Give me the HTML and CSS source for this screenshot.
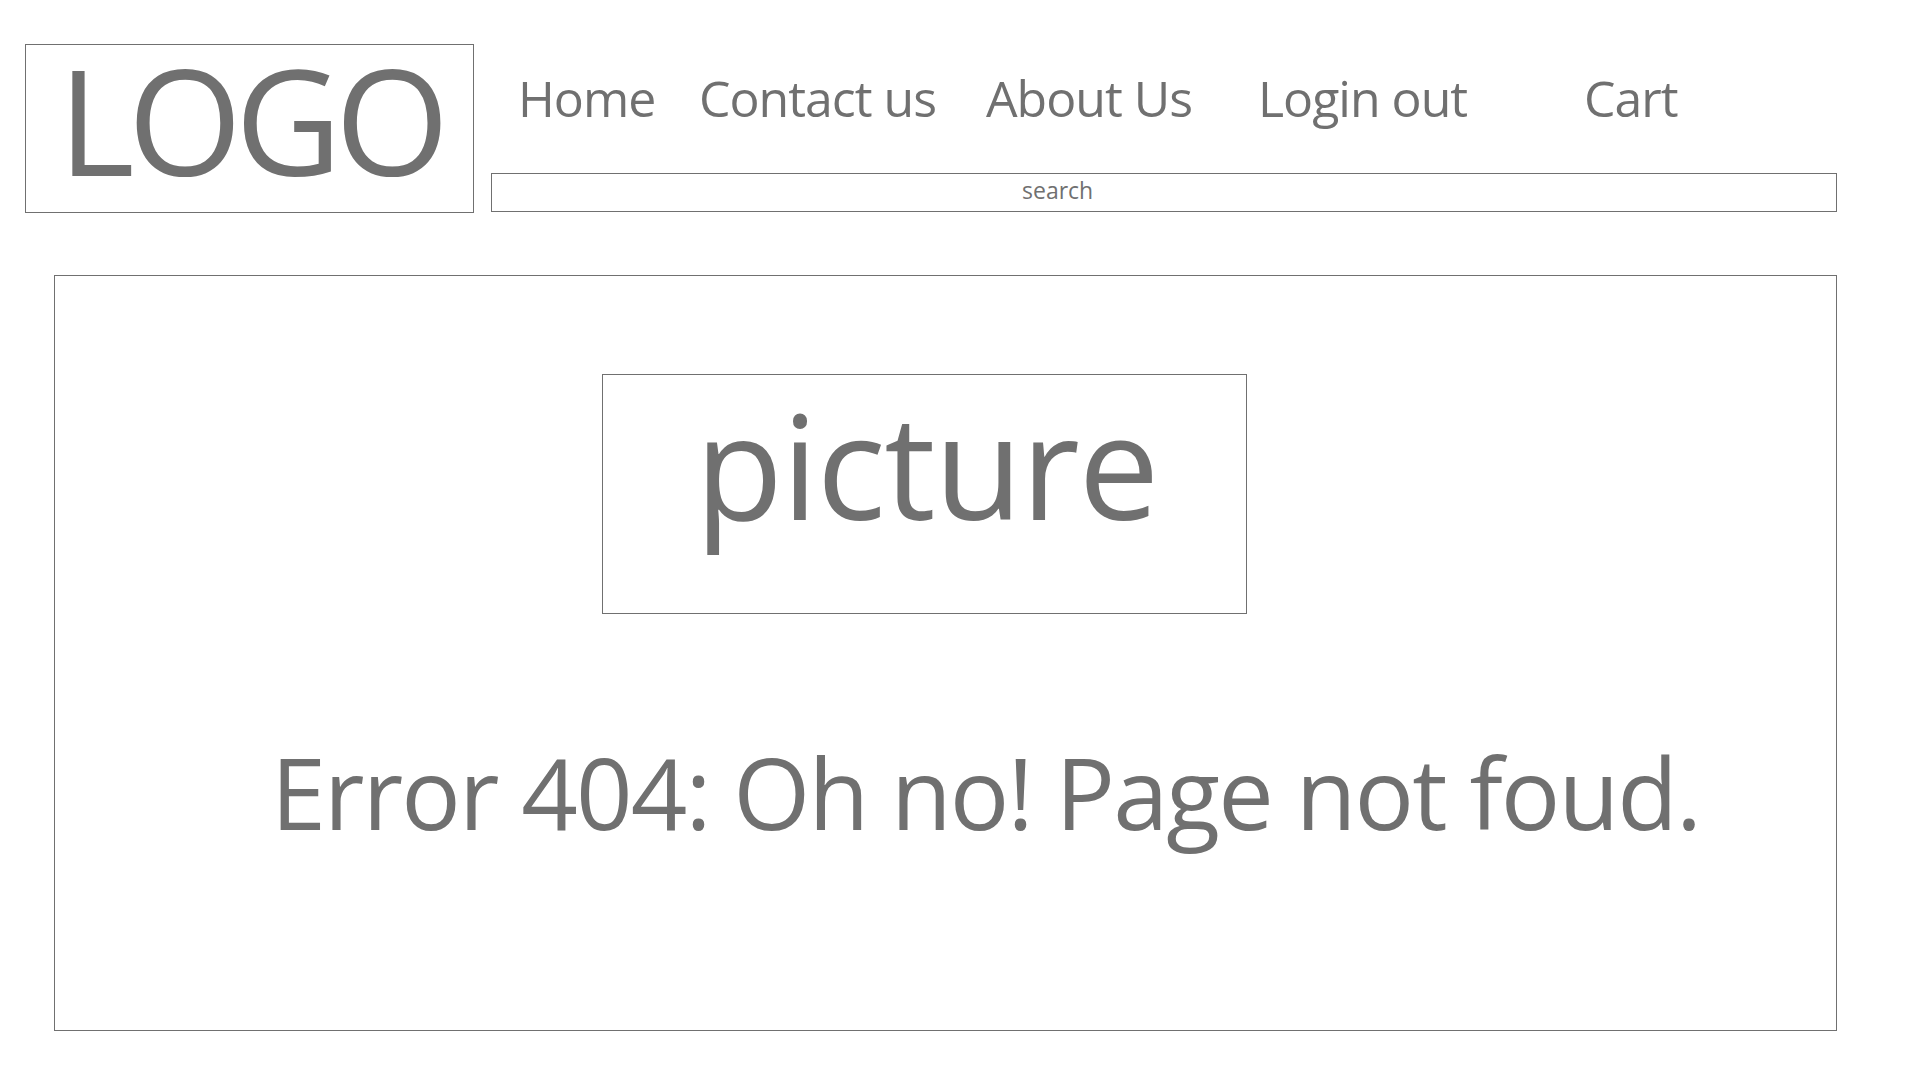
FILE: index.html
```html
<!DOCTYPE html>
<html lang="en">
<head>
<meta charset="utf-8">
<title>Error 404</title>
<link rel="stylesheet" href="styles.css">
</head>
<body>
<header class="header">
  <div class="logo">LOGO</div>
  <div class="header-right">
    <nav class="nav">
      <a class="nav-item" href="#">Home</a>
      <a class="nav-item" href="#">Contact us</a>
      <a class="nav-item" href="#">About Us</a>
      <a class="nav-item" href="#">Login out</a>
      <a class="nav-item" href="#">Cart</a>
    </nav>
    <div class="search">search</div>
  </div>
</header>
<main class="main">
  <div class="picture">picture</div>
  <p class="error">Error 404: Oh no! Page not foud.</p>
</main>
</body>
</html>
```
FILE: styles.css
```css
* { box-sizing: border-box; }
html, body { margin: 0; padding: 0; background: #ffffff; }
body {
  font-family: "Open Sans", "Noto Sans", sans-serif;
  color: #707070;
  width: 1920px;
  height: 1080px;
  overflow: hidden;
}
.header {
  display: flex;
  align-items: flex-start;
  padding-top: 44px;
  padding-left: 25px;
}
.logo {
  width: 449px;
  height: 169px;
  border: 1px solid #707070;
  font-size: 147px;
  line-height: 147px;
  padding-top: 1px;
  padding-left: 32px;
  letter-spacing: -7px;
  white-space: nowrap;
}
.header-right {
  margin-left: 17px;
  width: 1346px;
  display: flex;
  flex-direction: column;
}
.nav {
  margin-top: 29px;
  padding-left: 27px;
  display: grid;
  grid-template-columns: 181px 287px 272px 326px auto;
  height: 50px;
}
.nav-item {
  color: #707070;
  text-decoration: none;
  font-size: 50px;
  line-height: 50px;
  letter-spacing: -1px;
  white-space: nowrap;
}
.search {
  margin-top: 50px;
  height: 39px;
  border: 1px solid #707070;
  font-size: 23px;
  line-height: 33px;
  padding-left: 530px;
}
.main {
  margin-top: 62px;
  margin-left: 54px;
  width: 1783px;
  height: 756px;
  border: 1px solid #707070;
  padding-top: 98px;
}
.picture {
  margin-left: 547px;
  width: 645px;
  height: 240px;
  border: 1px solid #707070;
  font-size: 144px;
  line-height: 144px;
  padding-top: 17px;
  padding-left: 4px;
  letter-spacing: -1.4px;
  text-align: center;
}
.error {
  margin: 128px 0 0 0;
  padding-left: 216px;
  font-size: 99px;
  line-height: 99px;
  letter-spacing: -1.9px;
  white-space: nowrap;
}
```
